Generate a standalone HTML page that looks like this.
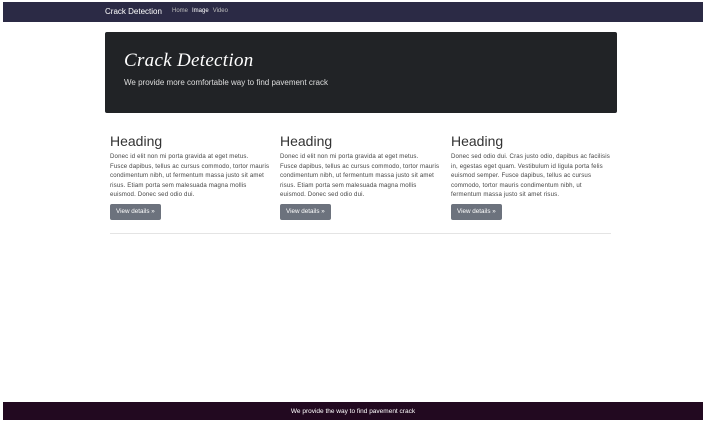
<!DOCTYPE html>
<html><head><style>
body{margin:0;width:705px;height:420px;background:#fff;position:relative;overflow:hidden;font-family:"Liberation Sans",sans-serif}
.nav{position:absolute;left:3px;right:2px;top:2px;height:20px;background:#2b2a45;color:#fff}
.brand{position:absolute;left:102px;top:5px;font-size:8px}
.links{position:absolute;left:169px;top:6px;font-size:6px;color:#bbb}
.links span{margin-right:4px}
.jumbo{position:absolute;left:105px;top:32px;width:512px;height:81px;background:#212326;border-radius:2px;color:#fff}
.jumbo h1{position:absolute;left:19px;top:18px;margin:0;font:italic 19px "Liberation Serif",serif;letter-spacing:0.3px}
.jumbo p{position:absolute;left:19px;top:46px;margin:0;font-size:8px;color:#ddd}
.col{position:absolute;top:133px;width:162px;color:#444}
.col h2{margin:0;font-weight:normal;font-size:14px;color:#333;line-height:17px}
.col p{margin:2px 0 0;font-size:6.1px;line-height:9.6px;height:48px;letter-spacing:0.15px}
.btn{display:inline-block;background:#6c727d;color:#fff;font-size:6.3px;padding:4px 6px 5px;border-radius:2px;margin-top:4px}
.hr{position:absolute;left:110px;top:233px;width:501px;height:1px;background:#e4e4e4}
.foot{position:absolute;left:3px;right:2px;top:402px;height:18px;background:#220920;color:#fff;font-size:6.5px;text-align:center;line-height:20px}
</style></head><body>
<div class="nav"><div class="brand">Crack Detection</div><div class="links"><span>Home</span><span style="color:#fff">Image</span><span>Video</span></div></div>
<div class="jumbo"><h1>Crack Detection</h1><p>We provide more comfortable way to find pavement crack</p></div>
<div class="col" style="left:110px"><h2>Heading</h2><p>Donec id elit non mi porta gravida at eget metus.<br>Fusce dapibus, tellus ac cursus commodo, tortor mauris condimentum nibh, ut fermentum massa justo sit amet risus. Etiam porta sem malesuada magna mollis euismod. Donec sed odio dui.</p><span class="btn">View details »</span></div>
<div class="col" style="left:280px"><h2>Heading</h2><p>Donec id elit non mi porta gravida at eget metus.<br>Fusce dapibus, tellus ac cursus commodo, tortor mauris condimentum nibh, ut fermentum massa justo sit amet risus. Etiam porta sem malesuada magna mollis euismod. Donec sed odio dui.</p><span class="btn">View details »</span></div>
<div class="col" style="left:451px"><h2>Heading</h2><p>Donec sed odio dui. Cras justo odio, dapibus ac facilisis in, egestas eget quam. Vestibulum id ligula porta felis euismod semper. Fusce dapibus, tellus ac cursus commodo, tortor mauris condimentum nibh, ut fermentum massa justo sit amet risus.</p><span class="btn">View details »</span></div>
<div class="hr"></div>
<div class="foot">We provide the way to find pavement crack</div>
</body></html>
